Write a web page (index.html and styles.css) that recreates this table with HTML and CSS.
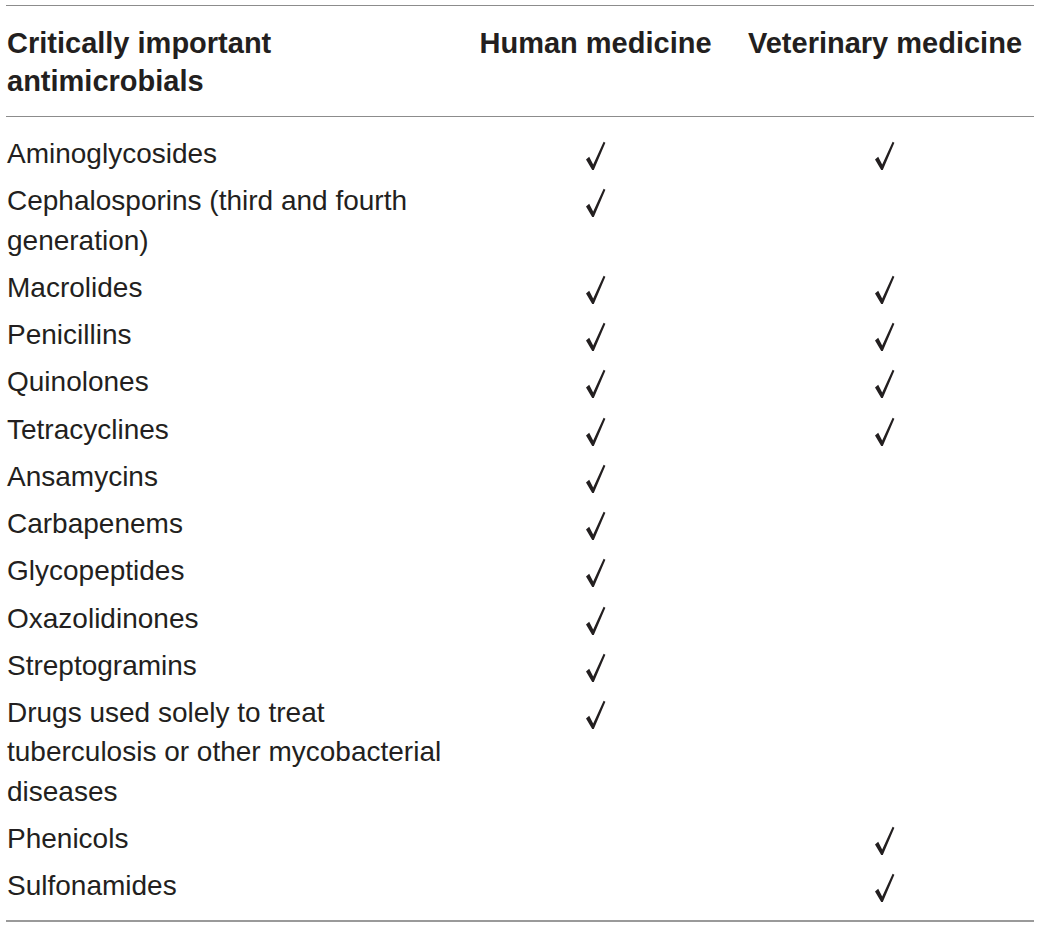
FILE: index.html
```html
<!DOCTYPE html>
<html lang="en">
<head>
  <meta charset="UTF-8">
  <title>Critically important antimicrobials</title>
  <link rel="stylesheet" href="styles.css">
</head>
<body>
  <svg width="0" height="0" class="defs">
    <symbol id="tick" viewBox="0 0 20 30">
      <polygon points="0,18.5 3.2,15.8 7.2,23.5 17.6,0.8 19.4,1.8 7.8,29 6.2,29"/>
    </symbol>
  </svg>

  <table class="cia">
    <colgroup>
      <col class="c-name">
      <col class="c-human">
      <col class="c-vet">
    </colgroup>
    <thead>
      <tr>
        <th class="name">Critically important antimicrobials</th>
        <th>Human medicine</th>
        <th>Veterinary medicine</th>
      </tr>
    </thead>
    <tbody>
      <tr><td>Aminoglycosides</td><td class="mk"><svg class="tick"><use href="#tick"/></svg></td><td class="mk"><svg class="tick"><use href="#tick"/></svg></td></tr>
      <tr><td>Cephalosporins (third and fourth generation)</td><td class="mk"><svg class="tick"><use href="#tick"/></svg></td><td class="mk"></td></tr>
      <tr><td>Macrolides</td><td class="mk"><svg class="tick"><use href="#tick"/></svg></td><td class="mk"><svg class="tick"><use href="#tick"/></svg></td></tr>
      <tr><td>Penicillins</td><td class="mk"><svg class="tick"><use href="#tick"/></svg></td><td class="mk"><svg class="tick"><use href="#tick"/></svg></td></tr>
      <tr><td>Quinolones</td><td class="mk"><svg class="tick"><use href="#tick"/></svg></td><td class="mk"><svg class="tick"><use href="#tick"/></svg></td></tr>
      <tr><td>Tetracyclines</td><td class="mk"><svg class="tick"><use href="#tick"/></svg></td><td class="mk"><svg class="tick"><use href="#tick"/></svg></td></tr>
      <tr><td>Ansamycins</td><td class="mk"><svg class="tick"><use href="#tick"/></svg></td><td class="mk"></td></tr>
      <tr><td>Carbapenems</td><td class="mk"><svg class="tick"><use href="#tick"/></svg></td><td class="mk"></td></tr>
      <tr><td>Glycopeptides</td><td class="mk"><svg class="tick"><use href="#tick"/></svg></td><td class="mk"></td></tr>
      <tr><td>Oxazolidinones</td><td class="mk"><svg class="tick"><use href="#tick"/></svg></td><td class="mk"></td></tr>
      <tr><td>Streptogramins</td><td class="mk"><svg class="tick"><use href="#tick"/></svg></td><td class="mk"></td></tr>
      <tr><td>Drugs used solely to treat tuberculosis or other mycobacterial diseases</td><td class="mk"><svg class="tick"><use href="#tick"/></svg></td><td class="mk"></td></tr>
      <tr><td>Phenicols</td><td class="mk"></td><td class="mk"><svg class="tick"><use href="#tick"/></svg></td></tr>
      <tr><td>Sulfonamides</td><td class="mk"></td><td class="mk"><svg class="tick"><use href="#tick"/></svg></td></tr>
    </tbody>
  </table>
</body>
</html>
```

FILE: styles.css
```css
body {
  margin: 0;
  padding: 5px 6px 0 6px;
  background: #fff;
  color: #231f20;
  font-family: "Liberation Sans", Arial, sans-serif;
}

.defs {
  position: absolute;
}

.cia {
  width: 1028px;
  border-collapse: collapse;
  table-layout: fixed;
  font-size: 28px;
}

.c-name { width: 449px; }
.c-human { width: 281px; }
.c-vet { width: 298px; }

.cia thead tr {
  border-top: 1px solid #8c8c8c;
  border-bottom: 1px solid #8c8c8c;
}

.cia th {
  font-size: 29px;
  font-weight: bold;
  text-align: center;
  vertical-align: top;
  line-height: 38px;
  padding: 18px 0 16px 0;
  white-space: nowrap;
}

.cia th.name {
  text-align: left;
  white-space: normal;
  padding-left: 1px;
  padding-right: 140px;
}

.cia tbody tr:first-child td { padding-top: 17px; }
.cia tbody tr:last-child td { padding-bottom: 15px; }

.cia tbody {
  border-bottom: 2px solid #9a9a9a;
}

.cia td {
  line-height: 39.25px;
  padding: 4px 0 4px 1px;
  vertical-align: top;
}

.cia td.mk {
  text-align: center;
  padding-left: 0;
}

.tick {
  width: 20px;
  height: 30px;
  margin-top: 7px;
  fill: #231f20;
  display: inline-block;
  vertical-align: top;
}
```
